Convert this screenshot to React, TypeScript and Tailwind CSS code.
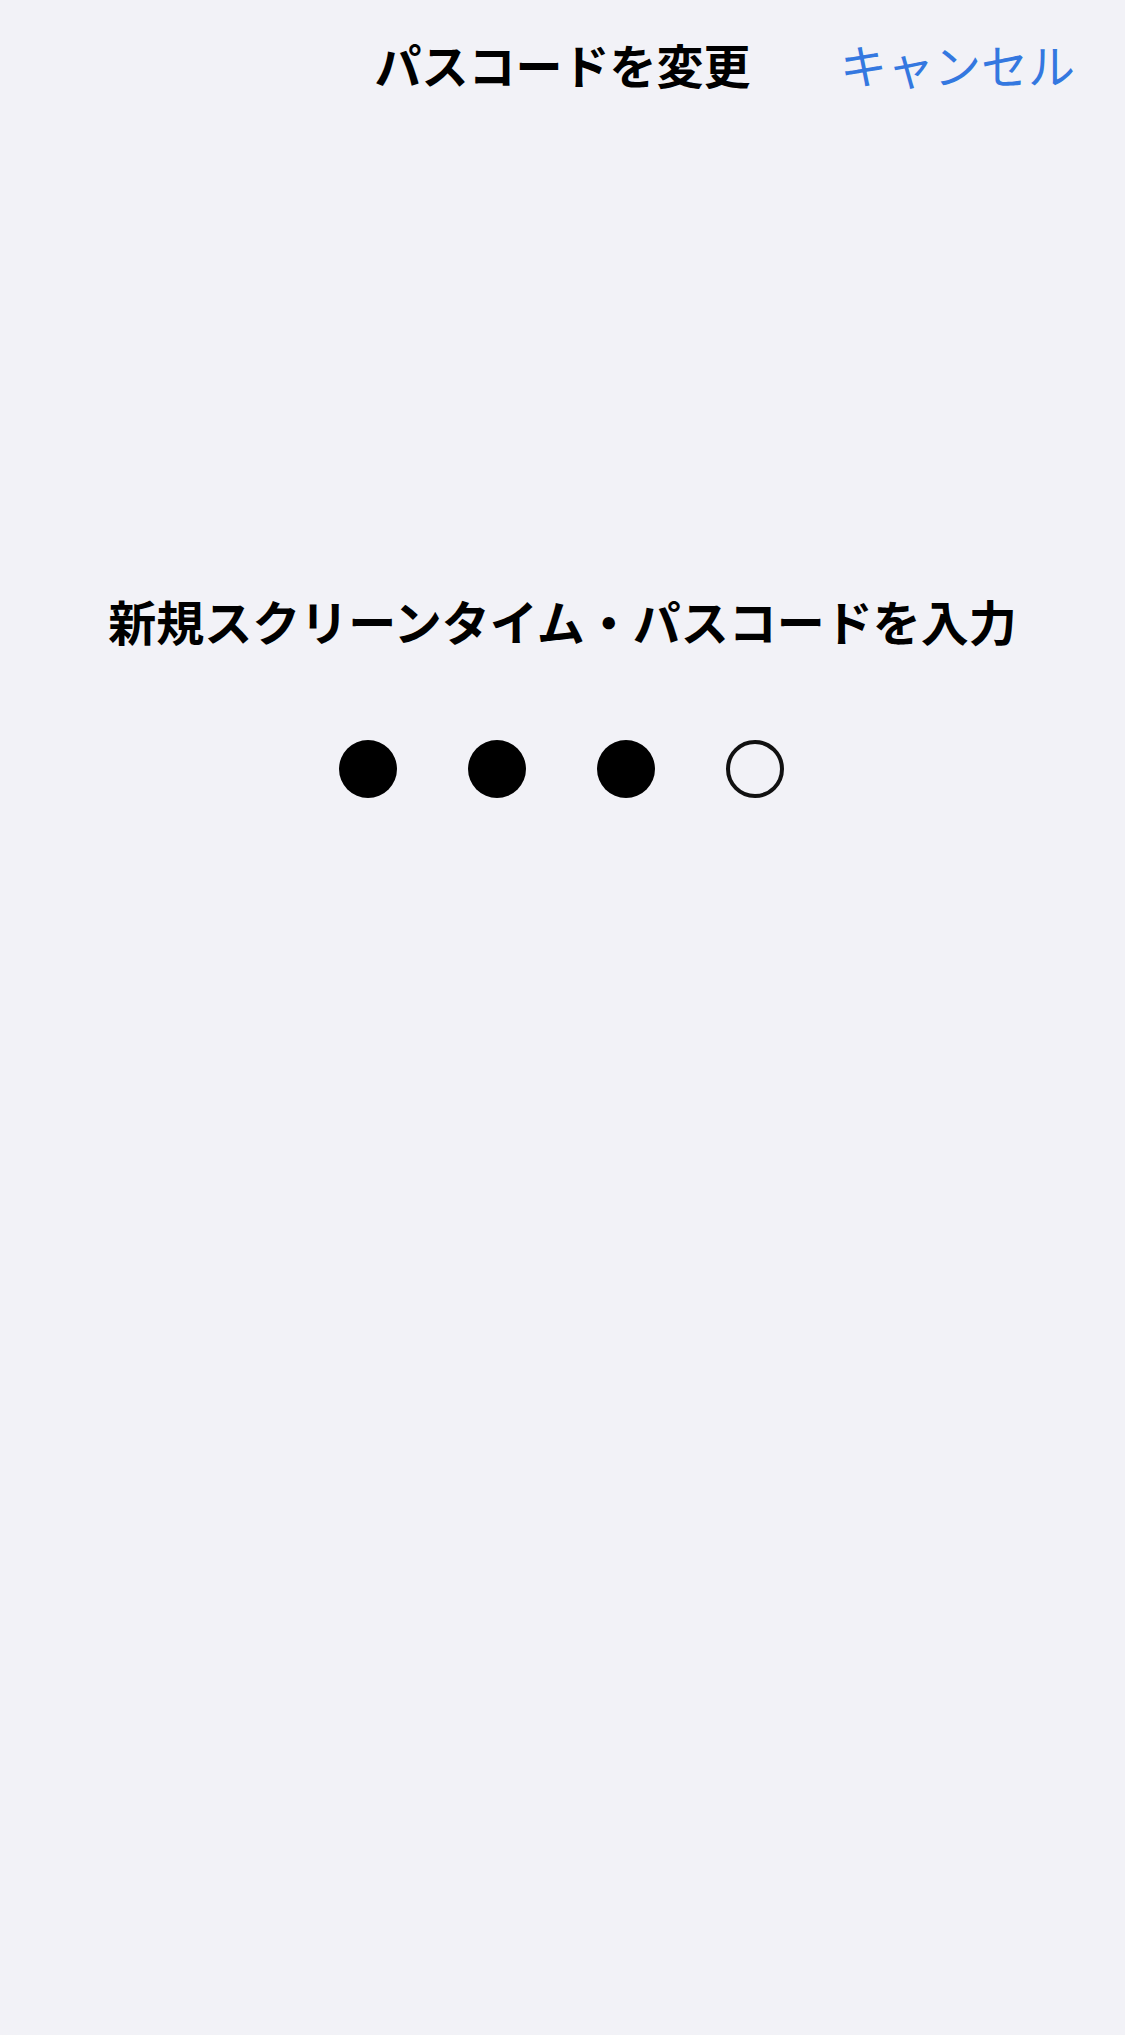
export default function App() {
  const font = { fontFamily: '"Noto Sans CJK JP", "Noto Sans", sans-serif' };
  return (
    <div className="min-h-[2035px] w-[1125px] bg-[#f2f2f7]" style={font}>
      <div className="grid h-[127px] grid-cols-[1fr_auto_1fr] items-center">
        <div />
        <div className="text-[47px] font-bold leading-none text-black">パスコードを変更</div>
        <div className="flex justify-end pr-[50px]">
          <span className="text-[47px] leading-none text-[#3478e0]">キャンセル</span>
        </div>
      </div>
      <div className="mt-[469px] text-center text-[48px] font-bold leading-none text-black">
        新規スクリーンタイム・パスコードを入力
      </div>
      <div className="mt-[96px] flex justify-center gap-[71px] pr-[3px]">
        <div className="h-[58px] w-[58px] rounded-full bg-black" />
        <div className="h-[58px] w-[58px] rounded-full bg-black" />
        <div className="h-[58px] w-[58px] rounded-full bg-black" />
        <div className="h-[58px] w-[58px] rounded-full border-[4px] border-[#111]" />
      </div>
    </div>
  );
}
